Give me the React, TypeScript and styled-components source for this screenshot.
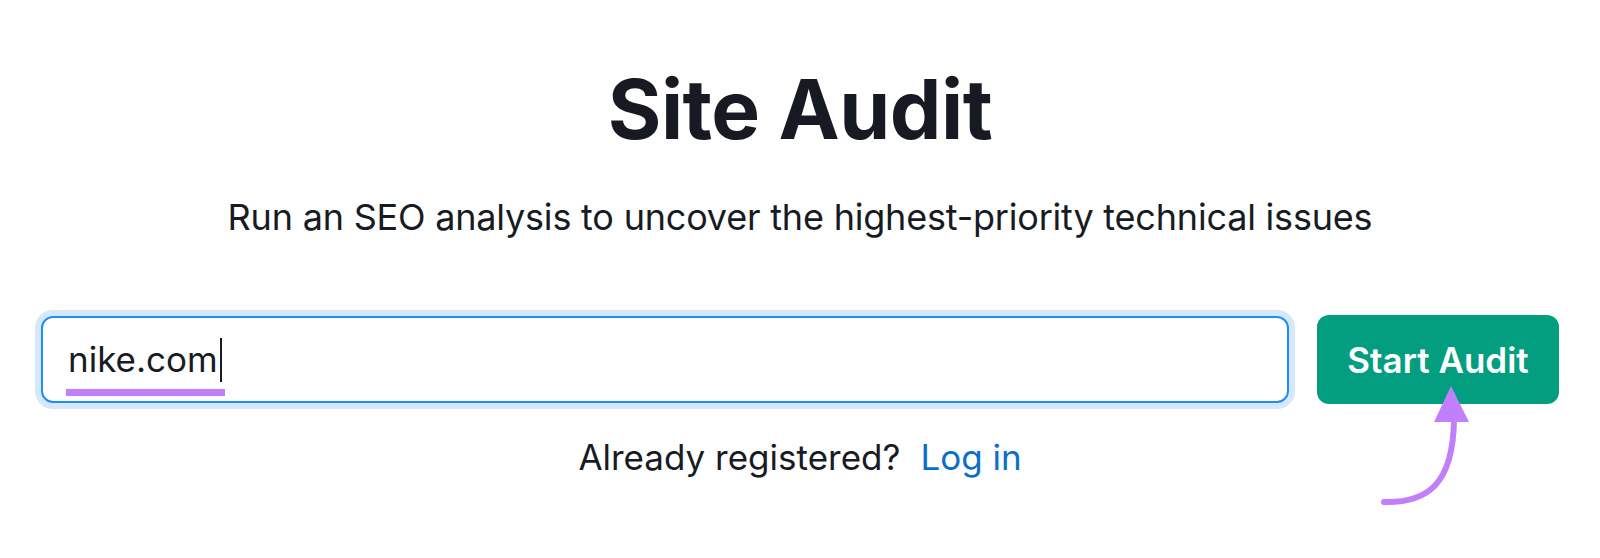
import React from "react";
import styled, { createGlobalStyle } from "styled-components";

const GlobalStyle = createGlobalStyle`
  body {
    margin: 0;
    background: #ffffff;
    font-family: Inter, "Liberation Sans", sans-serif;
    color: #181b24;
  }
`;

const Page = styled.main`
  width: 1600px;
  height: 558px;
  display: flex;
  flex-direction: column;
  align-items: center;
  padding-top: 69px;
  box-sizing: border-box;
`;

const Title = styled.h1`
  margin: 0;
  font-size: 82px;
  line-height: 1;
  font-weight: 700;
  color: #171a22;
  letter-spacing: -0.5px;
`;

const Subtitle = styled.p`
  margin: 48px 0 0;
  font-size: 36px;
  line-height: 1;
  font-weight: 400;
  letter-spacing: -0.2px;
  color: #181b24;
`;

const SearchRow = styled.div`
  margin-top: 80px;
  width: 1518px;
  display: flex;
  align-items: center;
  gap: 28px;
`;

const Field = styled.div`
  flex: 1;
  height: 87px;
  box-sizing: border-box;
  border: 2px solid #1b8ef8;
  border-radius: 12px;
  box-shadow: 0 0 0 6px #d6e8fc;
  display: flex;
  align-items: center;
  padding-left: 25px;
`;

const Value = styled.span`
  position: relative;
  display: inline-flex;
  align-items: center;
  font-size: 35px;
  line-height: 1;
  color: #181b24;

  &::after {
    content: "";
    position: absolute;
    left: -2px;
    right: -3px;
    bottom: -14px;
    height: 7px;
    background: #c27ffc;
  }
`;

const Caret = styled.span`
  display: inline-block;
  width: 2px;
  height: 44px;
  margin-left: 2px;
  background: #181b24;
`;

const ButtonWrap = styled.div`
  position: relative;
`;

const Button = styled.button`
  width: 242px;
  height: 89px;
  border: none;
  border-radius: 12px;
  background: #029e7f;
  color: #ffffff;
  font-family: Inter, "Liberation Sans", sans-serif;
  font-size: 35px;
  font-weight: 600;
  padding: 0;
`;

const Arrow = styled.svg`
  position: absolute;
  left: 60px;
  top: 65px;
  overflow: visible;
`;

const LoginLine = styled.p`
  margin: 36px 0 0;
  font-size: 35px;
  line-height: 1;
  color: #181b24;
`;

const LoginLink = styled.a`
  margin-left: 20px;
  color: #0a6ecb;
  text-decoration: none;
`;

const App = () => {
  return (
    <>
      <GlobalStyle />
      <Page>
        <Title>Site Audit</Title>
        <Subtitle>
          Run an SEO analysis to uncover the highest-priority technical issues
        </Subtitle>
        <SearchRow>
          <Field>
            <Value>
              nike.com
              <Caret />
            </Value>
          </Field>
          <ButtonWrap>
            <Button>Start Audit</Button>
            <Arrow width="100" height="130" viewBox="0 0 100 130">
              <path
                d="M77 40 C76 105 50 123 7 122"
                fill="none"
                stroke="#c27ffc"
                strokeWidth="6"
                strokeLinecap="round"
              />
              <polygon points="74,6 57,42 92,42" fill="#c27ffc" />
            </Arrow>
          </ButtonWrap>
        </SearchRow>
        <LoginLine>
          Already registered?
          <LoginLink href="#">Log in</LoginLink>
        </LoginLine>
      </Page>
    </>
  );
};

export default App;
